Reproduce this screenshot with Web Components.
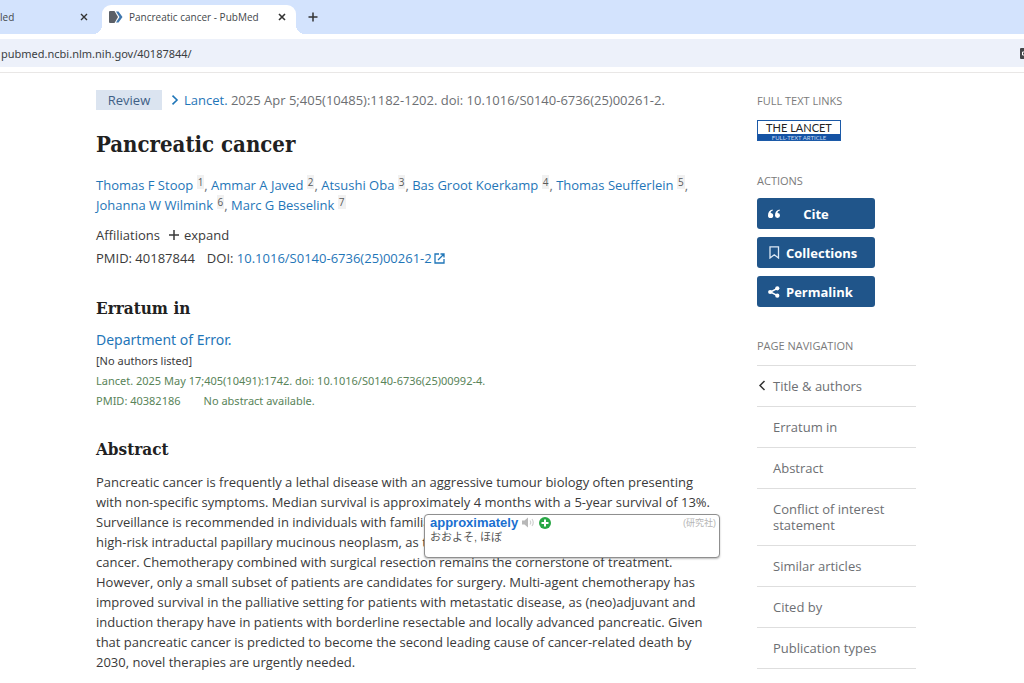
<!DOCTYPE html>
<html lang="en">
<head>
<meta charset="utf-8">
<meta name="viewport" content="width=device-width, initial-scale=1">
<title>Pancreatic cancer - PubMed</title>
<style>
  :root {
    --link: #1f76b8;
    --ink: #3a3a3a;
    --muted: #6d6f73;
    --brand: #20558a;
    --rule: #dedede;
    --serif: "DejaVu Serif Condensed", "DejaVu Serif", "Liberation Serif", serif;
  }
  body {
    margin: 0;
    background: #fff;
    color: var(--ink);
    font: 13px/20px "Open Sans", "Noto Sans", sans-serif;
  }
</style>
</head>
<body>
<pubmed-page></pubmed-page>

<script>
  function define(name, html) {
    const template = document.createElement('template');
    template.innerHTML = html;
    customElements.define(name, class extends HTMLElement {
      constructor() {
        super();
        this.attachShadow({ mode: 'open' }).append(template.content.cloneNode(true));
      }
    });
  }

  define('browser-tabs', `
    <style>
      :host { display: flex; height: 34px; background: #d3e3fd; color: #44474b; font-size: 10px; overflow: hidden; }
      button { border: 0; background: none; padding: 0; width: 16px; height: 16px; display: grid; place-items: center; color: #333; }
      .tab { display: flex; align-items: center; box-sizing: border-box; height: 34px; }
      .other { width: 102px; justify-content: space-between; padding-right: 10px; white-space: nowrap; }
      .active { position: relative; width: 194px; padding: 0 6px; margin-top: 5px; height: 29px; padding-bottom: 5px; background: #fff; border-radius: 9px 9px 0 0; gap: 6px; }
      .active::before, .active::after { content: ""; position: absolute; bottom: 0; width: 9px; height: 9px; }
      .active::before { left: -9px; background: radial-gradient(circle at 0 0, #d3e3fd 9px, #fff 9px); }
      .active::after { right: -9px; background: radial-gradient(circle at 100% 0, #d3e3fd 9px, #fff 9px); }
      .title { flex: 1; white-space: nowrap; }
      .active > svg { flex: none; }
      .new { margin: 9px; }
    </style>
    <div class="tab other"><span>led</span>
      <button aria-label="Close tab"><svg width="8" height="8" viewBox="0 0 8 8" stroke="currentColor" stroke-width="1.4"><path d="M1 1l6 6M7 1l-6 6"/></svg></button></div>
    <div class="tab active">
      <svg width="15" height="14" viewBox="0 0 15 14"><path d="M2 1h4.500l3.500 6-3.500 6H2Q1 13 1 12V2Q1 1 2 1z" fill="#5b6067"/><path d="M8 1.500H10.500L14.500 7l-4 5.500H8L11.500 7z" fill="#3f76ad"/></svg>
      <span class="title">Pancreatic cancer - PubMed</span>
      <button aria-label="Close tab"><svg width="8" height="8" viewBox="0 0 8 8" stroke="currentColor" stroke-width="1.600"><path d="M1 1l6 6M7 1l-6 6"/></svg></button></div>
    <button class="new" aria-label="New tab"><svg width="10" height="10" viewBox="0 0 10 10" stroke="currentColor" stroke-width="1.500"><path d="M5 .5v9M.5 5h9"/></svg></button>
  `);

  define('address-bar', `
    <style>
      :host { display: block; padding: 5px 0; border-bottom: 1px solid #e9e7e6; }
      form { display: flex; align-items: center; height: 28px; background: #edf1fa; }
      input { flex: 1; min-width: 0; border: 0; padding: 1px 1px 0; background: none; color: #3b3e42; font: 11px/20px "Noto Sans", sans-serif; }
      button { border: 0; padding: 0; width: 4px; height: 11px; background: none; display: flex; overflow: hidden; }
      svg { flex: none; }
    </style>
    <form><input aria-label="Address" value="pubmed.ncbi.nlm.nih.gov/40187844/">
      <button type="button" aria-label="Translate"><svg width="11" height="11" viewBox="0 0 11 11"><rect width="11" height="11" rx="1" fill="#45474a"/><path d="M5 4H2.500v3H5" fill="none" stroke="#fff"/></svg></button></form>
  `);

  define('author-link', `
    <style>
      :host { display: inline; white-space: nowrap; color: var(--muted); }
      a { color: var(--link); text-decoration: none; }
      sup { font-size: 10px; line-height: 12px; vertical-align: 4px; background: #f1f1f1; padding: 0 1px; color: #5a5a5a; }
    </style><a href="#"><slot></slot></a> <sup><slot name="n"></slot></sup>`);

  define('section-title', `
    <style>
      :host { display: block; }
      h2 { margin: 0; font: bold 17px/24px var(--serif); color: #212121; }
    </style><h2><slot></slot></h2>`);

  define('article-header', `
    <style>
      :host { display: block; }
      a { color: var(--link); text-decoration: none; }
      .cite { display: flex; align-items: center; color: var(--muted); white-space: nowrap; }
      .badge { background: #dbe4f0; color: #3f5f86; width: 66px; text-align: center; margin-right: 9px; }
      .cite svg { margin-right: 5px; }
      h1 { margin: 18px 0 15px; font: bold 22px/32px var(--serif); color: #212121; }
      .authors { color: var(--muted); }
      .aff { margin-top: 10px; display: flex; align-items: center; }
      button { display: flex; align-items: center; gap: 5px; border: 0; padding: 0; margin-left: 9px; background: none; color: inherit; font: inherit; }
      .ids { margin-top: 3px; display: flex; align-items: center; gap: 12px; white-space: nowrap; }
      .ids a { display: inline-flex; align-items: center; gap: 2px; }
    </style>
    <div class="cite"><span class="badge">Review</span>
      <svg width="8" height="10" viewBox="0 0 8 10" fill="none" stroke="#1f76b8" stroke-width="1.600"><path d="M1.500 .7L6 5 1.500 9.300"/></svg>
      <span><a href="#">Lancet.</a> 2025 Apr 5;405(10485):1182-1202. doi: 10.1016/S0140-6736(25)00261-2.</span></div>
    <h1>Pancreatic cancer</h1>
    <div class="authors"><author-link>Thomas F Stoop<span slot="n">1</span></author-link>, <author-link>Ammar A Javed<span slot="n">2</span></author-link>, <author-link>Atsushi Oba<span slot="n">3</span></author-link>, <author-link>Bas Groot Koerkamp<span slot="n">4</span></author-link>, <author-link>Thomas Seufferlein<span slot="n">5</span></author-link>,<br><author-link>Johanna W Wilmink<span slot="n">6</span></author-link>, <author-link>Marc G Besselink<span slot="n">7</span></author-link></div>
    <div class="aff">Affiliations <button><svg width="10" height="10" viewBox="0 0 10 10" stroke="currentColor" stroke-width="1.500"><path d="M5 0v10M0 5h10"/></svg>expand</button></div>
    <div class="ids"><span>PMID: 40187844</span><span>DOI: <a href="#">10.1016/S0140-6736(25)00261-2<svg width="11" height="11" viewBox="0 0 11 11" fill="none" stroke="currentColor" stroke-width="1.300"><path d="M5 1H1v9h9V6M6.500 1H10v3.500M10 1L4 7"/></svg></a></span></div>
  `);

  define('erratum-section', `
    <style>
      :host { display: block; margin-top: 28px; font-size: 11px; font-family: "Noto Sans", sans-serif; }
      a { display: block; margin-top: 9px; font-size: 14px; line-height: 22px; color: var(--link); text-decoration: none; }
      .green { color: #598459; }
      .row { display: flex; gap: 23px; }
    </style>
    <section-title>Erratum in</section-title>
    <a href="#">Department of Error.</a>
    <div>[No authors listed]</div>
    <div class="green">Lancet. 2025 May 17;405(10491):1742. doi: 10.1016/S0140-6736(25)00992-4.</div>
    <div class="green row"><span>PMID: 40382186</span><span>No abstract available.</span></div>
  `);

  define('dictionary-popup', `
    <style>
      :host { display: block; box-sizing: border-box; width: 296px; height: 44px; padding: 0 3px 0 5px; background: #fff; border: 1px solid #8f8f8f; border-radius: 4px; box-shadow: 0 1px 2px #0004; font: 11px/14px "Liberation Sans", "Noto Sans CJK JP", sans-serif; color: #555; }
      .head { display: flex; align-items: center; height: 15px; gap: 4px; }
      b { font-size: 13px; color: #1a6fd0; }
      small { margin-left: auto; font-size: 9px; color: #b5b5b5; }
      button { border: 0; padding: 0; background: none; display: flex; }
    </style>
    <div class="head"><b>approximately</b>
      <button aria-label="Listen"><svg width="13" height="11" viewBox="0 0 13 11"><path d="M0 3.500h2.500L6 .5v10L2.500 7.500H0z" fill="#b8b8b8"/><path d="M8 3.500q1.500 2 0 4M10 2q2.500 3.500 0 7" fill="none" stroke="#d0d0d0" stroke-width="1.200"/></svg></button>
      <button aria-label="Add word"><svg width="12" height="12" viewBox="0 0 12 12"><circle cx="6" cy="6" r="6" fill="#28a745"/><path d="M6 2.500v7M2.500 6h7" stroke="#fff" stroke-width="2"/></svg></button>
      <small>(研究社)</small></div>
    <div>おおよそ, ほぼ</div>
  `);

  define('abstract-section', `
    <style>
      :host { display: block; margin-top: 26px; }
      .body { position: relative; margin-top: 11px; }
      p { margin: 0; white-space: nowrap; }
      dictionary-popup { position: absolute; left: 328px; top: 42px; }
    </style>
    <section-title>Abstract</section-title>
    <div class="body">
      <p>Pancreatic cancer is frequently a lethal disease with an aggressive tumour biology often presenting<br>with non-specific symptoms. Median survival is approximately 4 months with a 5-year survival of 13%.<br>Surveillance is recommended in individuals with familial<br>high-risk intraductal papillary mucinous neoplasm, as th<br>cancer. Chemotherapy combined with surgical resection remains the cornerstone of treatment.<br>However, only a small subset of patients are candidates for surgery. Multi-agent chemotherapy has<br>improved survival in the palliative setting for patients with metastatic disease, as (neo)adjuvant and<br>induction therapy have in patients with borderline resectable and locally advanced pancreatic. Given<br>that pancreatic cancer is predicted to become the second leading cause of cancer-related death by<br>2030, novel therapies are urgently needed.</p>
      <dictionary-popup></dictionary-popup>
    </div>
  `);

  define('side-heading', `
    <style>
      :host { display: block; }
      h3 { margin: 0; font-size: 11px; line-height: 16px; font-weight: 400; color: #7b7b7b; text-transform: uppercase; }
    </style><h3><slot></slot></h3>`);

  define('lancet-link', `
    <style>
      :host { display: block; margin: 11px 0 32px; }
      a { display: block; box-sizing: border-box; width: 84px; height: 21px; border: 1px solid #1c5aa8; overflow: hidden; text-align: center; text-decoration: none; white-space: nowrap; background: #fff; }
      span { display: block; font: 11px/13px Lato, sans-serif; color: #222; }
      span + span { background: #1553a4; color: #c8daf2; font-size: 6px; line-height: 7px; }
    </style><a href="#"><span>THE LANCET</span><span>FULL-TEXT ARTICLE</span></a>`);

  define('action-button', `
    <style>
      :host { display: block; }
      button { width: 118px; height: 31px; display: flex; align-items: center; gap: 6px; padding: 0 11px; border: 0; border-radius: 3px; background: var(--brand); color: #fff; font: bold 13px/20px "Open Sans", "Noto Sans", sans-serif; }
      :host([centered]) .label { flex: 1; padding-right: 18px; text-align: center; }
    </style><button><slot name="icon"></slot><span class="label"><slot></slot></span></button>`);

  define('nav-item', `
    <style>
      :host { display: block; border-top: 1px solid var(--rule); }
      a { display: flex; padding: 12px 0; line-height: 16px; color: var(--muted); text-decoration: none; }
      .mark { width: 16px; flex: none; display: flex; align-items: center; }
      svg { display: none; }
      :host([current]) svg { display: block; }
    </style><a href="#"><span class="mark"><svg width="10" height="12" viewBox="0 0 10 12" fill="none" stroke="#333" stroke-width="1.500"><path d="M7.500 1L3 5.500 7.500 10"/></svg></span><span><slot></slot></span></a>`);

  define('page-sidebar', `
    <style>
      :host { display: block; padding-top: 3px; }
      .actions { display: grid; gap: 8px; margin: 9px 0 31px; }
      nav { margin-top: 11px; border-bottom: 1px solid var(--rule); }
      svg { display: block; }
    </style>
    <side-heading>Full text links</side-heading>
    <lancet-link></lancet-link>
    <side-heading>Actions</side-heading>
    <div class="actions">
      <action-button centered><svg slot="icon" width="12" height="10" viewBox="0 0 12 10" fill="#fff"><path d="M4.500 .5C1.500 1 0 3.500 0 6.500a2.600 2.600 0 1 0 2.600-2.600C2.800 2.600 3.600 2 5 1.600zM11.500 .5C8.500 1 7 3.500 7 6.500a2.500 2.500 0 1 0 2.500-2.600C9.700 2.600 10.500 2 12 1.600z"/></svg>Cite</action-button>
      <action-button><svg slot="icon" width="12" height="13" viewBox="0 0 12 13" fill="none" stroke="#dce8f5" stroke-width="1.300"><path d="M2 .8h8.500v11.200L6.250 8.800 2 12z"/></svg>Collections</action-button>
      <action-button><svg slot="icon" width="12" height="12" viewBox="0 0 12 12" fill="#fff"><path d="M9.500 2.300L2.300 6l7.200 3.700" fill="none" stroke="#fff" stroke-width="1.500"/><circle cx="9.300" cy="2.300" r="2.100"/><circle cx="2.200" cy="6" r="2.100"/><circle cx="9.300" cy="9.700" r="2.100"/></svg>Permalink</action-button>
    </div>
    <side-heading>Page navigation</side-heading>
    <nav><nav-item current>Title &amp; authors</nav-item><nav-item>Erratum in</nav-item><nav-item>Abstract</nav-item><nav-item>Conflict of interest statement</nav-item><nav-item>Similar articles</nav-item><nav-item>Cited by</nav-item><nav-item>Publication types</nav-item></nav>
  `);

  define('pubmed-page', `
    <style>
      :host { display: block; }
      .page { display: grid; grid-template-columns: minmax(0, 1fr) 159px; gap: 60px; padding: 17px 108px 11px 96px; align-items: start; }
    </style>
    <header><browser-tabs></browser-tabs><address-bar></address-bar></header>
    <div class="page">
      <main><article-header></article-header><erratum-section></erratum-section><abstract-section></abstract-section></main>
      <page-sidebar></page-sidebar>
    </div>
  `);
</script>
</body>
</html>
